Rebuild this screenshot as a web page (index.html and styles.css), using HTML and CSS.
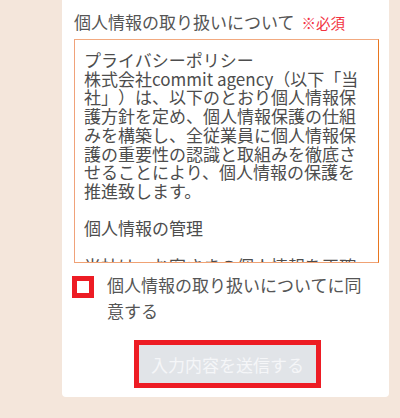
FILE: index.html
```html
<!DOCTYPE html>
<html lang="ja">
<head>
<meta charset="utf-8">
<title>個人情報の取り扱い</title>
<link rel="stylesheet" href="styles.css">
</head>
<body>
<div class="page">
  <form class="card">
    <div class="field">
      <label class="field-label" for="policy">個人情報の取り扱いについて<span class="required">※必須</span></label>
      <textarea id="policy" class="policy" readonly>プライバシーポリシー
株式会社commit agency（以下「当社」）は、以下のとおり個人情報保護方針を定め、個人情報保護の仕組みを構築し、全従業員に個人情報保護の重要性の認識と取組みを徹底させることにより、個人情報の保護を推進致します。

個人情報の管理

当社は、お客さまの個人情報を正確かつ最新の状態に保ち、個人情報への不正アクセス・紛失・破損・改ざん・漏洩などを防止するため、セキュリティシステムの維持・管理体制の整備・社員教育の徹底等の必要な措置を講じ、安全対策を実施し個人情報の厳重な管理を行ないます。</textarea>
    </div>
    <label class="agree">
      <input type="checkbox" class="agree-box">
      <span class="agree-text">個人情報の取り扱いについてに同意する</span>
    </label>
    <div class="actions">
      <button type="submit" class="submit" disabled>入力内容を送信する</button>
    </div>
  </form>
</div>
</body>
</html>
```

FILE: styles.css
```css
html, body {
  margin: 0;
  padding: 0;
}

body {
  background: #f4e6db;
  font-family: "Noto Sans CJK JP", "Noto Sans", sans-serif;
  color: #555555;
  height: 418px;
  overflow: hidden;
  text-spacing-trim: space-all;
}

.page {
  margin-left: 62px;
  width: 327px;
}

.card {
  background: #ffffff;
  border-radius: 0 0 4px 4px;
  padding: 10px 10px 9px 12px;
  display: flex;
  flex-direction: column;
}

.field {
  display: flex;
  flex-direction: column;
}

.field-label {
  font-size: 17px;
  line-height: 24px;
  color: #555555;
  margin-bottom: 4px;
}

.required {
  color: #f2323f;
  font-size: 14.5px;
  margin-left: 7px;
}

.policy {
  box-sizing: border-box;
  width: 305px;
  height: 224px;
  margin: 0;
  padding: 11px 9px 9px 9px;
  border: 1px solid;
  border-color: #f2aa80 #e8761f #f0a274 #f0a27a;
  border-radius: 0;
  background: #ffffff;
  font-family: "Noto Sans CJK JP", "Noto Sans", sans-serif;
  font-size: 17px;
  line-height: 18.7px;
  color: #4d4d4d;
  resize: none;
  overflow: hidden;
  outline: none;
  scrollbar-width: none;
  text-spacing-trim: space-all;
}

.policy::-webkit-scrollbar {
  display: none;
}

.agree {
  display: flex;
  align-items: flex-start;
  margin-top: 9px;
  padding-right: 12px;
}

.agree-box {
  appearance: none;
  -webkit-appearance: none;
  box-sizing: border-box;
  flex: none;
  width: 22px;
  height: 22px;
  margin: 4px 0 0 -2px;
  border: 5px solid #ed1c24;
  background: #ffffff;
  border-radius: 0;
}

.agree-text {
  margin-left: 13px;
  font-size: 17px;
  line-height: 25.5px;
  color: #555555;
}

.actions {
  display: flex;
  justify-content: center;
  margin-top: 17px;
}

.submit {
  box-sizing: border-box;
  width: 187px;
  height: 48px;
  margin-left: 2px;
  border: 5px solid #ed1c24;
  border-radius: 0;
  background: #e1e4e8;
  color: #f5f6f8;
  font-family: "Noto Sans CJK JP", "Noto Sans", sans-serif;
  font-size: 17px;
  padding: 0;
}
```
